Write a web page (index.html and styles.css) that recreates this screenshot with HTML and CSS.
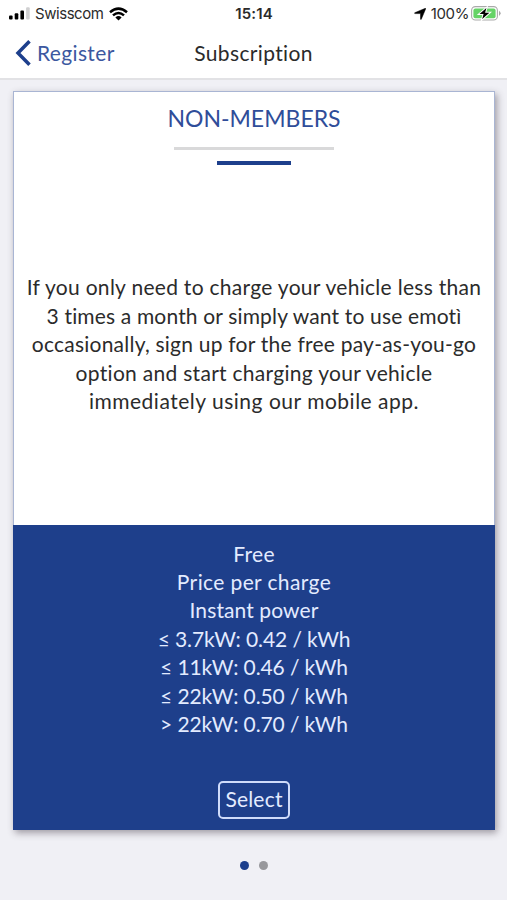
FILE: index.html
```html
<!DOCTYPE html>
<html lang="en">
<head>
<meta charset="utf-8">
<title>Subscription</title>
<link rel="stylesheet" href="styles.css">
</head>
<body>
<header class="top">
  <div class="status">
    <div class="status-left">
      <svg class="signal" width="21" height="13" viewBox="0 0 21 13"><rect x="0" y="8.5" width="3.6" height="4" rx="1"/><rect x="5.7" y="6.2" width="3.6" height="6.3" rx="1"/><rect x="11.4" y="3.5" width="3.6" height="9" rx="1"/><rect x="17.1" y="0.3" width="3.6" height="12.2" rx="1" fill="#d0d0d1"/></svg>
      <span class="carrier">Swisscom</span>
      <svg class="wifi" width="19" height="14" viewBox="0 0 19 14"><g fill="none" stroke="#000" stroke-width="2.5"><path d="M1 5.2Q9.5-2 18 5.2"/><path d="M4 8.4Q9.5 3.5 15 8.4"/></g><path d="M6.4 10.4Q9.5 7.8 12.6 10.4L9.5 13.6Z"/></svg>
    </div>
    <span class="time">15:14</span>
    <div class="status-right">
      <svg class="location" width="12" height="12" viewBox="0 0 12 12"><path d="M11.3.3Q12 0 11.7.8L7.3 11.2Q6.7 12 6.5 11V5.6H1Q0 5.3.8 4.7Z" stroke="#000" stroke-width=".5"/></svg>
      <span class="percent">100%</span>
      <svg class="battery" width="30" height="15" viewBox="0 0 30 15"><rect x=".6" y=".6" width="25.8" height="13.4" rx="3.8" fill="#fff" stroke="#a9aaa9" stroke-width="1.1"/><rect x="2.4" y="2.4" width="22.2" height="9.8" rx="2" fill="#65d366"/><path d="M28 4.7Q31.3 7.3 28 9.9Z" fill="#a9aaa9"/><path d="M15.4 2.1 8.5 8h4.1l-1.4 5.1L18.4 6.8h-4.3Z" stroke="#fff" stroke-width="2" paint-order="stroke"/></svg>
    </div>
  </div>
  <nav class="nav">
    <a class="back"><svg width="17" height="28" viewBox="0 0 17 28"><path d="M14.5 2.2 3 14l11.5 11.8" fill="none" stroke="#1d3f8c" stroke-width="3.5"/></svg><span>Register</span></a>
    <h1 class="title">Subscription</h1>
  </nav>
</header>
<main class="card">
  <h2 class="plan">NON-MEMBERS</h2>
  <div class="rule"></div>
  <div class="accent"></div>
  <p class="copy">
    <span class="line l1">If you only need to charge your vehicle less than</span>
    <span class="line l2">3 times a month or simply want to use emotì</span>
    <span class="line l3">occasionally, sign up for the free pay-as-you-go</span>
    <span class="line l4">option and start charging your vehicle</span>
    <span class="line l5">immediately using our mobile app.</span>
  </p>
  <section class="prices">
    <ul class="list">
      <li class="p1">Free</li>
      <li class="p2">Price per charge</li>
      <li class="p3">Instant power</li>
      <li class="p4">≤ 3.7kW: 0.42 / kWh</li>
      <li class="p5">≤ 11kW: 0.46 / kWh</li>
      <li class="p6">≤ 22kW: 0.50 / kWh</li>
      <li class="p7">&gt; 22kW: 0.70 / kWh</li>
    </ul>
    <button class="select">Select</button>
  </section>
</main>
<div class="dots"><i class="dot on"></i><i class="dot"></i></div>
</body>
</html>
```
FILE: styles.css
```css
* { box-sizing: border-box; margin: 0; padding: 0; }
body {
  width: 507px;
  height: 900px;
  overflow: hidden;
  background: #f0f0f5;
  color: #2b2b2b;
  font-family: Lato, sans-serif;
  font-size: 21px;
  font-variant-ligatures: none;
}
svg { display: block; flex: none; }
.top { height: 80px; background: #fff; border-bottom: 2px solid #e2e2e5; }
.status {
  display: grid;
  grid-template-columns: 1fr auto 1fr;
  align-items: center;
  height: 27px;
  padding: 0 6px 0 7px;
  font: 15px/27px Inter, sans-serif;
}
.status-left, .status-right { display: flex; align-items: center; }
.status-left { padding-left: 2px; }
.status-right { justify-content: flex-end; }
.carrier { margin: 0 6px 0 5px; letter-spacing: -.45px; }
.time { font-weight: 600; letter-spacing: .15px; }
.percent { margin: 0 2px 0 5px; letter-spacing: -.4px; }
.nav {
  display: grid;
  grid-template-columns: 1fr auto 1fr;
  align-items: center;
  height: 51px;
  padding: 0 15px;
}
.back { display: flex; align-items: center; gap: 5px; color: #3c58a0; letter-spacing: .35px; }
.back span, .title { margin-top: -1px; }
.title { font-size: 21px; font-weight: 400; letter-spacing: .35px; }
.card {
  display: flex;
  flex-direction: column;
  align-items: center;
  width: 482px;
  height: 739px;
  margin: 11px 0 0 13px;
  background: #fff;
  border: 1px solid #a9b5d3;
  box-shadow: 2px 3px 7px rgba(60, 50, 65, .45);
}
.plan { margin-top: 11px; font-size: 23px; line-height: 30px; font-weight: 400; color: #2f4d99; }
.rule { width: 160px; height: 3px; margin-top: 14px; background: #d9d9da; }
.accent { width: 74px; height: 4px; margin-top: 11px; background: #1d3f8c; }
.copy {
  flex: 1;
  display: flex;
  flex-direction: column;
  align-items: center;
  justify-content: center;
  padding-bottom: 1px;
}
.line { line-height: 28.4px; white-space: nowrap; }
.l1 { letter-spacing: .29px; }
.l2 { letter-spacing: .16px; }
.l3 { letter-spacing: .23px; }
.l4 { letter-spacing: .29px; }
.l5 { letter-spacing: .51px; }
.prices {
  display: flex;
  flex-direction: column;
  align-items: center;
  width: 482px;
  height: 305px;
  flex: none;
  margin: 0 -1px -1px;
  padding-top: 14.5px;
  background: #1e3f8b;
  color: #e3ebff;
}
.list { list-style: none; text-align: center; line-height: 28.4px; }
.p1 { letter-spacing: .3px; }
.p2 { letter-spacing: .38px; }
.p3 { letter-spacing: .1px; }
.p4, .p5, .p6, .p7 { letter-spacing: -.1px; }
.select {
  width: 72px;
  height: 38px;
  margin-top: 42.5px;
  padding-bottom: 2px;
  border: 2px solid #cfdbfa;
  border-radius: 5px;
  background: none;
  color: #e3ebff;
  font: 21px/30px Lato, sans-serif;
  letter-spacing: .2px;
}
.dots { display: flex; justify-content: center; gap: 10px; margin-top: 31px; }
.dot { width: 9px; height: 9px; border-radius: 50%; background: #98989c; }
.on { background: #1d3f8c; }
```
